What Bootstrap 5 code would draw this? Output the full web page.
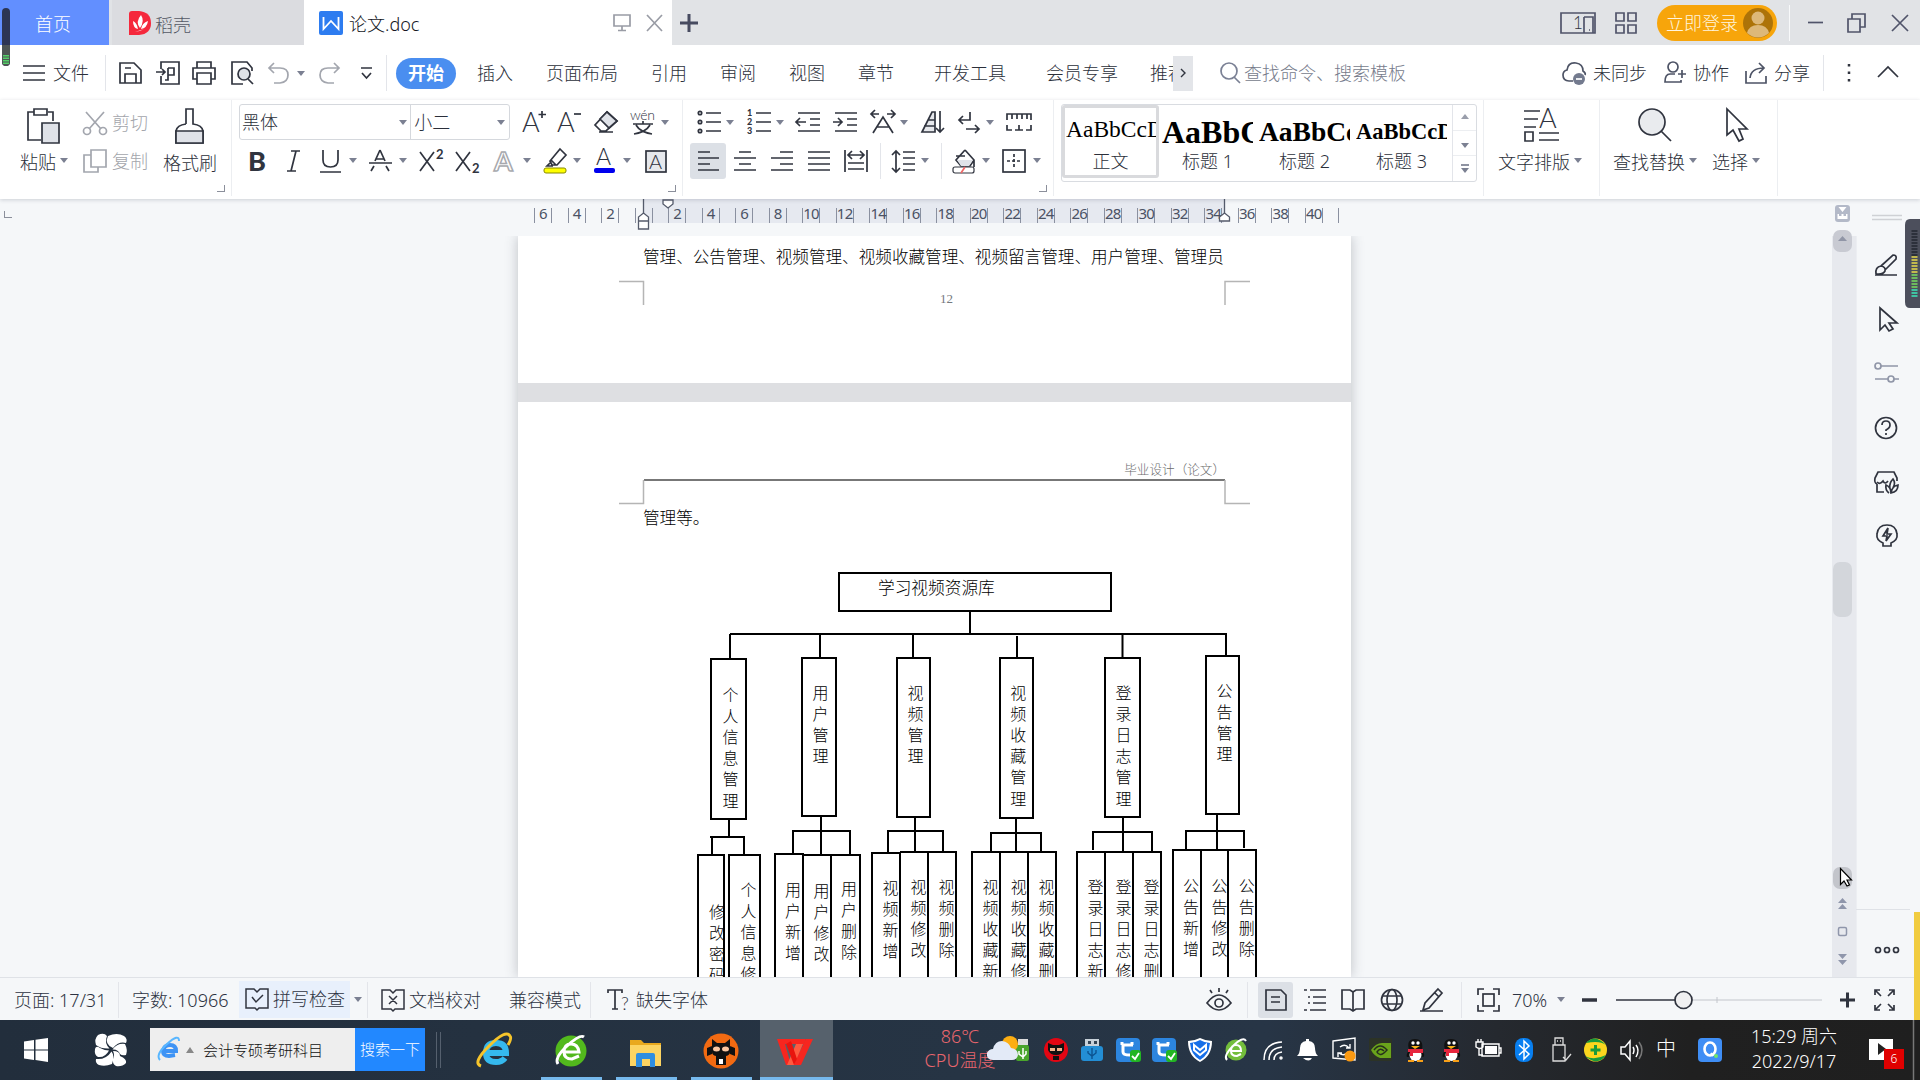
<!DOCTYPE html>
<html lang="zh-CN">
<head>
<meta charset="utf-8">
<title>论文.doc</title>
<link href="https://cdn.jsdelivr.net/npm/bootstrap@5.3.0/dist/css/bootstrap.min.css" rel="stylesheet">
<style>
body{width:1920px;height:1080px;overflow:hidden;font-family:"Noto Sans","Noto Sans CJK SC",sans-serif;font-size:18px;font-weight:300;line-height:24px;color:#2b2f3a;background:#f5f7f9;white-space:nowrap}
svg{display:block;overflow:visible;fill:none;stroke:#30343f;stroke-width:1.7;flex:none}
svg text{stroke:none;fill:#30343f;font-family:Lato,sans-serif}
.gridrow{display:grid;align-items:center;justify-items:start}
.sepline{width:1px;background:#e3e5ea;height:36px}
.caret{width:0;height:0;border:4px solid transparent;border-top:5px solid #7b8092;border-bottom:0}
.dim{color:#a3a5ab}
.titlebar{height:45px;background:#e1e3e6}
.tab-home{width:109px;background:#628fff;color:#fff;padding-left:35px;margin-right:3px;padding-top:3px}
.tab-docer{width:192px;background:#dbdce0;padding-left:17px;gap:4px;color:#555966}
.tab-doc{width:368px;background:#fff;padding-left:15px;color:#16181f}
.tab-doc .fname{margin-left:6px;padding-top:2px}
.tab-doc svg.thin{stroke:#999ca5}
.title-tools{padding-left:8px;grid-template-columns:880px 55px 42px 132px 17px 39px 44px 20px}
.title-tools svg{stroke:#50546a}
.login{width:120px;height:36px;border-radius:18px;background:#f7a50b;color:#fff5df;padding-left:9px;gap:5px}
.menubar{height:55px;background:#fff;padding:1px 0 0 22px;grid-template-columns:31px 52px 13px 38px 36px 38px 38px 29px 21px 40px 28px 10px 81px 69px 105px 69px 69px 69px 76px 112px 104px 23px 46px 25px 317px 32px 70px 30px 51px 30px 49px 14px 39px 40px}
.startpill{width:60px;height:31px;border-radius:16px;background:#4a8ef0;color:#fff;font-weight:700;line-height:30px}
.morebtn{width:20px;height:35px;background:#e3e5e9}
.gray svg,svg.gray{stroke:#a3a6ae}
.share-tools{stroke:#4d5365}
.finder{color:#767b8b}
.ribbon{height:99px;background:#fff;box-shadow:0 1px 4px rgba(60,70,90,.22);position:relative;z-index:3}
.sect{position:relative;border-right:1px solid #eceef1;height:96px;padding-top:3px}
.launch{position:absolute;right:6px;bottom:4px;width:8px;height:7px;border:solid #8b8f9b;border-width:0 1.5px 1.5px 0}
.s1{width:232px}.s2{width:451px}.s3{width:371px}.s4{width:430px}.s5{width:116px}.s6{width:178px}
.colpaste{width:83px}.colcut{width:80px;padding-top:1px}
.rrow{height:38px}
.r2a{padding-left:7px;grid-template-columns:283px 35px 37px 36px 31px auto}
.r2b{padding-left:14px;padding-top:1px;grid-template-columns:36px 37px 30px 19px 31px 20px 36px 38px 30px 20px 30px 20px 30px 21px 24px}
.r3a{padding-left:14px;grid-template-columns:29px 21px 29px 20px 37px 37px 30px 20px 37px 29px 20px 26px}
.r3b{padding-left:7px;padding-top:1px;grid-template-columns:43px 37px 37px 37px 36px 12px 29px 20px 11px 30px 20px 31px 10px}
.onbtn{width:36px;height:36px;background:#dce0e6;border-radius:3px;padding:6px 7px}
.fontbox{width:271px;height:36px;border:1px solid #d5d8dd;border-radius:3px}
.fontname{width:172px;border-right:1px solid #d5d8dd;padding:0 3px 0 2px}
.fontsize{width:98px;padding:0 4px 0 3px}
.gallery{width:416px;height:78px;margin:1px 0 0 7px;border:1px solid #d9dce1;border-radius:3px}
.stylecell{width:97px;text-align:center}
.stylecell.sel{border:3px solid #d9dadd;height:73px;border-radius:3px}
.smp{display:block;overflow:hidden;margin:0 3px 0;height:44px;line-height:46px;text-align:left;color:#000;font-family:"Liberation Serif",serif;font-weight:400}
.sel .smp{margin:0 0 0 1px;font-size:23.5px;height:41px;line-height:42px}
.smp.h1s{font-size:32px;font-weight:700}.smp.h2s{font-size:27.5px;font-weight:700}.smp.h3s{font-size:22.5px;font-weight:700}
.lbl{display:block;font-size:18px}
.galbtns{width:24px;border-left:1px solid #e3e5ea}
.galbtns>div{height:25.5px;border-bottom:1px solid #eceef1}
.bigbtn{padding-top:5px}
.bigbtn .cap{margin-top:6px;gap:4px}
.s5.bigbtn,.s6{padding-top:8px}
.ruler{height:37px;padding-left:534px;position:relative}
.cornerbox{position:absolute;left:4px;top:12px;width:8px;height:7px;border:solid #8b8f9b;border-width:0 0 1.5px 1.5px}
.rulerband{position:absolute;left:643px;top:0;width:581px;height:24px;background:#e6e9f0}
.tick{width:33.53px;height:15px;margin-top:9px;position:relative;border-left:1px solid #8a90a0;font:15px/14px "Noto Sans",sans-serif;letter-spacing:-.8px;color:#4b5264}
.tick span{display:block;width:17px;height:15px;border-right:1px solid #8a90a0;text-align:center;line-height:10px}
.rmarks{position:absolute;left:0;top:0;stroke:#555b6b;stroke-width:1.3}
.work{height:741px;position:relative}
.gutter{width:518px}
.pages{width:833px;background:#dedfe2;box-shadow:0 0 12px rgba(60,65,80,.3);clip-path:inset(0 -14px 0 -14px)}
.sheet{background:#fff;position:relative;color:#000;font-family:"Noto Sans CJK SC",sans-serif}
.sheet1{height:147px;margin-bottom:19px;padding:8px 0 0 125px}
.sheet2{height:575px;padding:57px 126px 0 126px}
.para{font-size:16.6px;line-height:24px}
.sheet2 .para{margin:24px 0 0 -1px}
.pageno{font:13px/14px "Liberation Serif",serif;color:#75797f;width:607px;text-align:center;margin-top:24px}
.hdr{font-size:12.6px;line-height:20px;color:#6c6c6c;text-align:right;border-bottom:2px solid #777}
.marks{position:absolute;left:0;top:0;stroke:#b5b5b5;stroke-width:1.5}
.chart{position:absolute;left:0;top:0;width:833px;height:575px;overflow:hidden}
.chart svg{position:absolute;left:-518px;top:-402px;stroke:#000;stroke-width:2}
.vtxt{position:absolute;width:17px;font-size:16px;line-height:21.2px;white-space:normal;word-break:break-all;text-align:center}
.roottxt{position:absolute;left:360px;top:173px;font-size:16.7px}
.scroller{width:24px;background:#e7e9ee;margin-left:481px;position:relative}
.scroller svg{position:absolute;left:0;top:-37px;stroke:none}
.side{width:64px;border-left:1px solid #eceef2;position:relative}
.side svg{position:absolute;left:-1px;top:-37px}
.statusbar{height:43px;border-top:1px solid #dfe2e7;background:#f5f7f9;padding-left:14px;padding-top:1px;grid-template-columns:104px 14px 108px 127px 14px 28px 100px 81px 17px 29px 569px 42px 11px 45px 38px 39px 39px 42px 16px 35px 45px 25px 33px 225px 33px 30px;color:#2d3342;position:relative}
.spell{width:111px;height:37px;background:#e8f0fc;padding-left:6px;gap:4px;margin:-1px 0 0 -1px}
.viewon{width:35px;height:36px;background:#dce0e6;border-radius:3px;padding:6px 6px}
.taskbar{height:60px;background:linear-gradient(90deg,#222e3c 0,#263444 50%,#273546 66%,#25292f 78%,#202020 88%,#1f1f1f);padding-left:24px;display:flex;position:relative;color:#fff}
.taskbar svg{stroke:none}
.startcol{width:71px;padding-top:18px}.flowercol{width:55px;padding-top:14px}
.seek{width:205px;height:43px;margin-top:8px;background:#eee;color:#111;font-size:15px;padding-left:7px;gap:5px}
.seekbtn{width:70px;height:43px;margin-top:8px;background:#2288ff;color:#fff;font-size:15px;text-align:center;line-height:42px}
.dbl{width:5px;height:36px;margin:12px 0 0 11px;border:solid #55606e;border-width:0 1px}
.apps{margin-left:19px}
.app{width:61px;margin-right:14px;padding-top:14px;border-bottom:3px solid transparent;height:60px}
.app.ie{width:67px}
.app.run{border-color:#76b9ed}
.app.cur{width:73px;margin-right:0;background:#56616c;margin-left:-6px}
.app svg{margin-left:13px}.app.cur svg{margin-left:17px}.app.ie svg{margin-left:17px}
.cputemp{width:100px;margin-left:77px;color:#e9666e;font-size:18px;text-align:center;padding-top:4px}
.traysvg{position:absolute;left:0;top:-1020px}
.clock{position:absolute;left:1734px;top:4px;width:120px;text-align:center;line-height:24.5px}
.imechr{position:absolute;left:1656px;top:7px;font-size:20px;line-height:44px}
.badge6{position:absolute;left:1884px;top:29px;width:20px;height:20px;background:#e00000;font-size:12px;line-height:20px;text-align:center}
.overlay{position:absolute;left:0;top:0;z-index:9;pointer-events:none;stroke:none}
</style>
</head>
<body>
<!-- title bar -->
<div class="titlebar d-flex">
  <div class="tab-home d-flex align-items-center">首页</div>
  <div class="tab-docer d-flex align-items-center"><svg width="22" height="24"><path d="M0 3Q0 0 3 0H10Q22 1 22 12T10 24H0z" fill="#f5283c" stroke="none"/><path d="M11 17Q6 11 12 4Q16 10 11 17M9 18Q4 17 4 10Q8 12 9 18M12 18Q13 12 19 10Q18 17 12 18M6 21Q12 20 15 18" fill="#fff" stroke="none"/></svg><span class="pt-1">稻壳</span></div>
  <div class="tab-doc d-flex align-items-center"><svg width="24" height="24"><rect width="24" height="24" rx="2" fill="#2d7cf0" stroke="none"/><path d="M4.500 6V18L12 10L19.500 18V6" stroke="#fff" stroke-width="1.8"/></svg><span class="fname">论文.doc</span>
   <svg class="ms-auto thin" width="18" height="18"><path d="M1 1H17V12H1zM9 12V16M5 16.5H13"/></svg><svg class="ms-3 thin" width="25" height="16"><path d="M0 0L15 16M15 0L0 16"/></svg></div>
  <div class="title-tools gridrow">
    <svg width="18" height="18"><path d="M9 0V18M0 9H18" stroke="#474b60" stroke-width="3"/></svg>
    <svg width="36" height="22"><path d="M1 1H35V21H1zM24 5H33V21M24 5V21M29 18H30"/><text x="13" y="17" font-size="17">1</text></svg>
    <svg width="23" height="22"><path d="M1 1H9V9H1zM13 1H21V9H13zM1 13H9V21H1zM13 13H21V21H13z"/></svg>
    <div class="login d-flex align-items-center"><span>立即登录</span><svg width="30" height="30"><circle cx="15" cy="15" r="15" fill="#ad7308" stroke="none"/><circle cx="15" cy="10" r="6.5" fill="#ddb879" stroke="none"/><path d="M4 25Q6 17 15 17T26 25Q15 34 4 25" fill="#ddb879" stroke="none"/></svg></div>
    <div class="sepline bg-secondary-subtle"></div>
    <svg width="18" height="18"><path d="M2 8.5H17"/></svg>
    <svg width="22" height="20"><path d="M3 6H15V19H3zM7 6V1H20V14H15"/></svg>
    <svg width="20" height="18"><path d="M3 1L19 17M19 1L3 17"/></svg>
  </div>
</div>
<!-- menu bar -->
<div class="menubar gridrow">
  <svg width="24" height="16"><path d="M1 1H23M1 8H23M1 15H23"/></svg><span>文件</span><i class="sepline"></i>
  <svg width="24" height="24"><path d="M2 22V2H16L23 9V22zM7 22V13H18V22M7 7H13"/></svg>
  <svg width="24" height="24"><path d="M5 8V1H23V23H5V15M0 11H9M6 8L9 11L6 14M12 7H18V14H12V7V19H9"/></svg>
  <svg width="24" height="24"><path d="M5 7V1H19V7M5 18H1V7H23V18H19M5 12H19V23H5z"/></svg>
  <svg width="24" height="24"><path d="M22 10V7L17 1H2V23H13" /><circle cx="14" cy="13" r="6" fill="#dfe2e8"/><path d="M18 18L23 23"/></svg>
  <svg class="gray" width="22" height="22"><path d="M6 1L1 6L6 11M1 6H12Q20 6 20 13T12 21H6"/></svg><i class="caret"></i>
  <svg class="gray" width="22" height="22"><path d="M16 1L21 6L16 11M21 6H10Q2 6 2 13T10 21H16"/></svg>
  <svg width="16" height="14"><path d="M3 2H14M4 7L8.500 12L13 7"/></svg><i class="sepline"></i>
  <span class="startpill text-center">开始</span><span>插入</span><span>页面布局</span><span>引用</span><span>审阅</span><span>视图</span><span>章节</span><span>开发工具</span><span>会员专享</span><span class="overflow-hidden w-100">推荐</span>
  <div class="morebtn d-flex align-items-center justify-content-center"><svg width="6" height="8"><path d="M1 0L5 4L1 8" stroke-width="1.400"/></svg></div>
  <svg width="22" height="22"><path d="M15 15L21 21M18 9A8 8 0 1 1 2 9A8 8 0 1 1 18 9" stroke="#7a8094"/></svg><span class="finder">查找命令、搜索模板</span>
  <svg class="share-tools" width="26" height="24"><path d="M12 20H8Q2 20 2 14Q2 10 6 9Q7 1 15 2Q22 3 22 10Q25 12 24 14"/><circle cx="18" cy="18" r="6" fill="#737a8e" stroke="none"/><path d="M15 18H21" stroke="#fff"/></svg><span>未同步</span>
  <svg class="share-tools" width="24" height="24"><circle cx="10" cy="6" r="5"/><path d="M12 13H7Q2 13 2 21H18V19M19 9V17M15 13H23"/></svg><span>协作</span>
  <svg class="share-tools" width="24" height="24"><path d="M2 10V22H22V15M6 17Q7 7 20 7M15 2L20 7L15 12"/></svg><span>分享</span><i class="sepline"></i>
  <svg width="24" height="22"><path d="M12 2V4.500M12 9.500V12M12 17V19.500" stroke-width="2.5"/></svg>
  <svg width="24" height="14"><path d="M2 11L12 1L22 11"/></svg>
</div>
<!-- ribbon -->
<div class="ribbon d-flex">
  <div class="sect s1 d-flex">
    <div class="colpaste bigbtn ps-3"><svg class="ms-2" width="36" height="36"><path d="M10 4H4V32H17M24 4H29V13M10 1H23V7H10z"/><path d="M18 15H35V35H18z" fill="#dfe2e8"/></svg><div class="cap d-flex ps-1"><span>粘贴</span><i class="caret mt-2"></i></div></div>
    <div class="colcut dim gray"><div class="rrow d-flex align-items-center gap-1"><svg width="25" height="24"><path d="M3 1L18 18M21 1L6 18"/><circle cx="4" cy="20" r="3.5"/><circle cx="20" cy="20" r="3.5"/></svg><span>剪切</span></div>
    <div class="rrow d-flex align-items-center gap-1"><svg width="25" height="24"><path d="M8 6H1V23H15V18M8 1H23V18H8z"/></svg><span>复制</span></div></div>
    <div class="bigbtn"><svg class="ms-2 ps-1" width="35" height="37"><path d="M11 16V1H18V16Q27 17 28 23V35H1V23Q2 17 11 16"/><path d="M1 23H28V35H1z" fill="#dfe2e8"/></svg><div class="cap pt-0">格式刷</div></div>
    <i class="launch"></i>
  </div>
  <div class="sect s2">
    <div class="rrow gridrow r2a">
      <div class="fontbox d-flex"><div class="fontname d-flex align-items-center justify-content-between"><span>黑体</span><i class="caret"></i></div><div class="fontsize d-flex align-items-center justify-content-between"><span>小二</span><i class="caret"></i></div></div>
      <svg width="24" height="24"><text x="0" y="22" font-size="27" font-weight="300">A</text><path d="M20 1V8M16.500 4.500H24"/></svg>
      <svg width="24" height="24"><text x="0" y="22" font-size="27" font-weight="300">A</text><path d="M17 4H24"/></svg>
      <svg width="24" height="24"><path d="M13 2L23 11L12 21H7L1 15zM5 22H19"/><path d="M13 2L23 11L15 18L6 9z" fill="#dfe2e8"/></svg>
      <svg width="26" height="26"><text x="0" y="11" font-size="14" textLength="25">wén</text><path d="M3 15H23M13 12V15M6 16Q10 23 22 25M20 16Q16 23 4 25"/></svg><i class="caret"></i>
    </div>
    <div class="rrow gridrow r2b">
      <svg width="24" height="24"><text x="2" y="22" font-size="27" font-weight="900">B</text></svg>
      <svg width="24" height="24"><path d="M9 2H18M5 22H14M14 2L9 22"/></svg>
      <svg width="24" height="24"><path d="M4 1V11Q4 18 11.500 18T19 11V1M1 23H22"/></svg><i class="caret"></i>
      <svg width="24" height="24"><path d="M12 1L7 12M12 1L17 12M1 14H24M6 17L3 22M18 17L21 22M8 10H16"/></svg><i class="caret"></i>
      <svg width="26" height="24"><path d="M1 3L15 22M15 3L1 22"/><text x="17" y="10" font-size="13" font-weight="700">2</text></svg>
      <svg width="26" height="24"><path d="M1 3L15 22M15 3L1 22"/><text x="17" y="24" font-size="13" font-weight="700">2</text></svg>
      <svg width="24" height="24"><text x="1" y="22" font-size="27" font-weight="700" style="fill:#fff;stroke:#a7a9ae;stroke-width:1.5">A</text></svg><i class="caret"></i>
      <svg width="24" height="26"><path d="M17 1L23 7L14 17H9L7 13zM8 12L13 17M7 15L4 18H10"/><rect x="1" y="20" width="22" height="5" rx="2" fill="#ff0" stroke="#888a00" stroke-width="1"/></svg><i class="caret"></i>
      <svg width="24" height="26"><text x="3" y="17" font-size="23">A</text><rect x="1" y="20" width="21" height="5" rx="2" fill="#00e" stroke="none"/></svg><i class="caret"></i>
      <svg width="24" height="24"><rect x="2" y="2" width="20" height="21" fill="#e6e8ec"/><text x="5" y="19.500" font-size="20">A</text></svg>
    </div>
    <i class="launch"></i>
  </div>
  <div class="sect s3">
    <div class="rrow gridrow r3a">
      <svg width="24" height="24"><path d="M9 3H24M9 12H24M9 21H24"/><circle cx="3" cy="3" r="1.700"/><circle cx="3" cy="12" r="1.700"/><circle cx="3" cy="21" r="1.700"/></svg><i class="caret"></i>
      <svg width="24" height="24"><path d="M9 3H24M9 12H24M9 21H24"/><text x="0" y="6" font-size="9" font-weight="900">1</text><text x="0" y="15" font-size="9" font-weight="900">2</text><text x="0" y="24" font-size="9" font-weight="900">3</text></svg><i class="caret"></i>
      <svg width="24" height="24"><path d="M2 3H24M14 9H24M14 15H24M2 21H24M0 12H10M4 8L0 12L4 16"/></svg>
      <svg width="24" height="24"><path d="M2 3H24M14 9H24M14 15H24M2 21H24M0 12H9M5 8L9 12L5 16"/></svg>
      <svg width="26" height="24"><path d="M1 4H9M5 0L1 4L5 8M17 4H25M21 0L25 4L21 8M3 23L13 7L23 23M7 17H19"/></svg><i class="caret"></i>
      <svg width="24" height="24"><path d="M2 22L12 2H15V22zM8 10H15M4 16H15" fill="#e6e8ec"/><path d="M20 1V22M16 18L20 22L24 18"/></svg>
      <svg width="24" height="24"><path d="M13 2V10H2M6 6L2 10L6 14M9 19H22M18 15L22 19L18 23"/></svg><i class="caret"></i>
      <svg width="26" height="24"><path d="M1 10V4H25V10M6 4V9M11 4V9M16 4V9M21 4V9M1 15V20H6M20 20H25V15M13 15V20M9 20H17"/></svg>
    </div>
    <div class="rrow gridrow r3b">
      <div class="onbtn"><svg width="24" height="24"><path d="M1 3H13M1 9H22M1 15H13M1 21H22" /></svg></div>
      <svg width="24" height="24"><path d="M6 3H18M1 9H23M6 15H18M1 21H23"/></svg>
      <svg width="24" height="24"><path d="M10 3H23M1 9H23M10 15H23M1 21H23"/></svg>
      <svg width="24" height="24"><path d="M1 3H23M1 9H23M1 15H23M1 21H23"/></svg>
      <svg width="24" height="24"><path d="M1 1V23M23 1V23M4 6H20M8 2L4 6L8 10M16 2L20 6L16 10M4 14H20M4 20H20"/></svg><i class="sepline"></i>
      <svg width="24" height="24"><path d="M4 2V23M0 6L4 2L8 6M0 19L4 23L8 19M11 3H23M11 9H23M11 15H23M11 21H23"/></svg><i class="caret"></i><i class="sepline"></i>
      <svg width="26" height="24"><path d="M13 1L22 11V18M13 1L4 11L9 17H18L22 11M4 7H13" /><path d="M5 11H21L17 17H9z" fill="#dfe2e8" stroke="none"/><rect x="1" y="18" width="21" height="6" rx="2" fill="#fff" stroke-width="1.200"/><path d="M9 24L13 18" stroke="#e66"/></svg><i class="caret"></i>
      <svg width="24" height="24"><rect x="1" y="1" width="22" height="22"/><path d="M5 12H19M12 5V19" stroke-dasharray="3 2"/></svg><i class="caret"></i>
    </div>
    <i class="launch"></i>
  </div>
  <div class="sect s4"><div class="gallery d-flex">
    <div class="stylecell sel"><span class="smp">AaBbCcDd</span><span class="lbl">正文</span></div>
    <div class="stylecell pt-1"><span class="smp h1s">AaBbC</span><span class="lbl" style="margin-top:-4px">标题 1</span></div>
    <div class="stylecell pt-1"><span class="smp h2s">AaBbCc</span><span class="lbl" style="margin-top:-4px">标题 2</span></div>
    <div class="stylecell pt-1"><span class="smp h3s">AaBbCcD</span><span class="lbl" style="margin-top:-4px">标题 3</span></div>
    <div class="galbtns ms-auto"><div class="d-flex justify-content-center pt-2"><svg width="8" height="8"><path d="M0 6L4 1L8 6z" fill="#9a9eab" stroke="none"/></svg></div><div class="d-flex justify-content-center pt-2"><i class="caret mt-1"></i></div><div class="d-flex justify-content-center pt-2 border-0"><svg width="8" height="11"><path d="M0 1H8" stroke="#7b8092"/><path d="M0 4H8L4 9z" fill="#7b8092" stroke="none"/></svg></div></div>
  </div></div>
  <div class="sect s5 bigbtn"><svg style="margin-left:40px" width="36" height="34"><path d="M0 3H16M0 11H14M0 19H12M1 24H9V33H1zM15 25H35M15 32H35"/><text x="15" y="20" font-size="27" font-weight="300">A</text></svg><div class="cap d-flex" style="padding-left:14px;margin-top:8px"><span>文字排版</span><i class="caret mt-2"></i></div></div>
  <div class="sect s6 d-flex"><div style="padding-left:13px;width:99px" class="bigbtn pt-0"><svg style="margin-left:25px" width="34" height="34"><circle cx="14" cy="14" r="13" fill="#e9ebee"/><path d="M23 23L33 33"/></svg><div class="cap d-flex" style="margin-top:8px"><span>查找替换</span><i class="caret mt-2"></i></div></div>
  <div style="padding-left:13px" class="bigbtn pt-0"><svg style="margin-left:14px" width="24" height="34"><path d="M1 1V27L7 22L13 33L17 31L13 21H21z"/></svg><div class="cap d-flex" style="margin-top:8px"><span>选择</span><i class="caret mt-2"></i></div></div></div>
</div>
<!-- ruler -->
<div class="ruler d-flex"><i class="cornerbox"></i><div class="rulerband"></div><div class="d-flex" id="ticks"></div>
<svg class="rmarks" width="1400" height="37"><path d="M643.500 0V16M1224.500 0V16"/><path d="M663 1H673V5L668 9L663 5zM638.500 22V18L643.500 14L648.500 18V22zM638.500 22H648.500V30H638.500zM1219.500 22V18L1224.500 14L1229.500 18V22z" fill="#fff"/></svg></div>
<!-- document area -->
<div class="work d-flex">
  <div class="gutter"></div>
  <div class="pages">
    <div class="sheet sheet1"><svg class="marks" width="833" height="147"><path d="M101 45.500H125.500V69M732 45.500H707V69"/></svg><div class="para">管理、公告管理、视频管理、视频收藏管理、视频留言管理、用户管理、管理员</div><div class="pageno">12</div></div>
    <div class="sheet sheet2"><svg class="marks" width="833" height="147"><path d="M101 101.500H125.500V78M732 101.500H707V78"/></svg><div class="hdr">毕业设计（论文）</div><div class="para">管理等。</div>
      <div class="chart" id="chart"><svg width="1400" height="980"><path d="M839 573H1111V611H839zM970 612V634M730 634H1227M730 634V658M820 634V657M913 634V657M1017 636V657M1122.500 634V657M1226 634V655
M711 659H746V819H711zM802 658H836V816H802zM897 658H930V817H897zM1000 658H1033V818H1000zM1105 658H1140V817H1105zM1206 656H1239V814H1206z
M729 820V837M710 837H745M712 837V855M744 837V855M821 817V855M793 855V831H850V855M915 818V852M888 853V831H943V852M1016 819V852M991 852V833H1041V852M1123 818V852M1093 850V832H1152V852M1217 815V850M1186 850V831H1244V848
M698 990V855H724V990M729 990V855H760V990M775 990V854H803V990M803 855H860V990M831 855V990M872 990V853H900V990M900 852H956V990M928 852V990M972 990V852H1056V990M1000 852V990M1028 852V990M1077 990V852H1161V990M1105 852V990M1133 852V990M1173 990V850H1256V990M1201 850V990M1228 850V990"/></svg><div class="roottxt">学习视频资源库</div></div>
    </div>
  </div>
  <div class="scroller"><svg width="24" height="790"><rect x="3" y="6" width="15" height="17" rx="3" fill="#b3b9c8"/><path d="M6.500 8H14.500L10.500 13zM5.500 15H7V17H9.500V15H11.500V17H14V15H15.500V20H5.500z" fill="#fff"/><rect x="1" y="31" width="19" height="22" rx="7" fill="#c8cad2"/><path d="M6 42L10.500 37L15 42z" fill="#9095a6"/><rect x="1" y="363" width="19" height="55" rx="7" fill="#d3d6db"/><rect x="1" y="668" width="19" height="22" rx="7" fill="#c3c5cb"/><path d="M6 704L10.500 699L15 704zM6 710L10.500 705L15 710zM6 755H15L10.500 760zM6 761H15L10.500 766z" fill="#8f96ab"/><rect x="6.500" y="728.500" width="8" height="8" rx="1.500" stroke="#8f96ab" stroke-width="1.500"/></svg></div>
  <div class="side"><svg width="64" height="790">
    <path d="M16 16.500H46M16 20.500H46" stroke="#cfd1d5" stroke-width="1.300"/>
    <path d="M19 76H41M20 75Q19 68 25 67Q30 68 29 72Q27 76 20 75M25 67L37 56Q41 56 40 60L29 71"/>
    <path d="M24 109V131L29 126L33 132L37 130L33 124H41z"/>
    <g stroke="#9096a8"><circle cx="22" cy="167" r="3"/><path d="M25 167H42M19 180H32M38 180H43"/><circle cx="35" cy="180" r="3"/></g>
    <circle cx="30" cy="229" r="10.500"/><path d="M26 226Q26 222 30 222T34 226Q34 229 30 231V232M30 234V236"/>
    <path d="M21 285V293H28M21 285Q18 284 19 279L22 273H38L41 279V282M21 283Q24 286 27 282Q29 286 32 282M33 294Q29 291 30 286Q35 288 35 294Q42 293 42 286Q36 287 35 294M34 289Q33 284 37 280Q40 284 37 289"/>
    <path d="M27 347V344Q20 341 21 335Q22 326 31 326T41 335Q42 341 35 344V347zM32 329L27 337H31L30 342L35 335H31z"/>
    <path d="M0 710.500H54" stroke="#dfe2e7" stroke-width="1"/><circle cx="22" cy="751" r="2.500"/><circle cx="31" cy="751" r="2.500"/><circle cx="40" cy="751" r="2.500"/></svg></div>
</div>
<!-- status bar -->
<div class="statusbar gridrow">
  <span>页面: 17/31</span><i class="sepline"></i><span>字数: 10966</span>
  <div class="d-flex align-items-center"><div class="spell d-flex align-items-center"><svg width="24" height="22"><path d="M10 20H1V1H9L12 4L15 1H23V20H14L12 22zM7 9L11 14L18 7" stroke-width="1.500"/></svg><span>拼写检查</span></div><i class="caret ms-1"></i></div><i class="sepline"></i>
  <svg width="24" height="22"><path d="M10 20H1V1H9L12 4L15 1H23V20H14L12 22zM8 7L16 15M16 7L8 15" stroke-width="1.500"/></svg><span>文档校对</span><span>兼容模式</span><i class="sepline"></i>
  <svg width="26" height="24"><path d="M1 5V2H15V5M8 2V21M5 21H11"/><text x="14" y="22" font-size="18">?</text></svg><span>缺失字体</span>
  <svg width="26" height="26"><path d="M2 16Q14 0 26 16Q14 30 2 16z"/><circle cx="14" cy="16" r="4"/><path d="M14 5V1M7 6L5 3M21 6L23 3"/></svg><i class="sepline"></i>
  <div class="viewon"><svg width="24" height="24"><path d="M2 2H17L22 7V22H2zM7 9H16M7 14H16" /></svg></div>
  <svg width="24" height="24"><path d="M1 2H4M7 2H23M5 9H7M10 9H23M5 15H7M10 15H23M1 22H4M7 22H23"/></svg>
  <svg width="24" height="24"><path d="M12 4L9 2H1V21H9L12 23L15 21H23V2H15zM12 4V23"/></svg>
  <svg width="24" height="24"><circle cx="12" cy="12" r="10.500"/><ellipse cx="12" cy="12" rx="5" ry="10.500"/><path d="M3 8H21M3 16H21"/></svg>
  <svg width="26" height="24"><path d="M19 1L23 5L10 20L4 22L6 15zM16 5L20 9M1 23H24"/></svg><i class="sepline"></i>
  <svg width="24" height="24"><path d="M1 7V1H7M16 1H22V7M22 17V23H16M7 23H1V17"/><rect x="6" y="6" width="11" height="12"/></svg><span>70%</span><i class="caret"></i>
  <svg width="16" height="18"><path d="M0 9H15" stroke-width="3.500"/></svg>
  <svg width="208" height="20"><path d="M1 10H60"/><path d="M77 10H207M102 7V13" stroke="#c3c6cc" stroke-width="1"/><circle cx="68.500" cy="10" r="8.500" fill="#f0f0f1"/></svg>
  <svg width="16" height="18"><path d="M0 9H15M7.500 1.500V16.500" stroke-width="3"/></svg>
  <svg width="24" height="24"><path d="M8 8L2 2M2 7V2H7M15 8L21 2M16 2H21V7M8 16L2 22M2 17V22H7M15 16L21 22M16 22H21V17"/></svg>
</div>
<!-- taskbar -->
<div class="taskbar">
  <div class="startcol"><svg width="24" height="24"><path d="M0 3.500L10 2V11.500H0zM11.500 1.800L24 0V11.500H11.500zM0 12.500H10V22L0 20.500zM11.500 12.500H24V24L11.500 22z" fill="#fff"/></svg></div>
  <div class="flowercol"><svg width="32" height="32"><g fill="#fff"><path d="M14.500 14.500Q6 15 1 11Q-1 5 3 1Q9-2 12 2Q9 9 14.500 14.500"/><path d="M13 2Q22-2 29 2Q33 5 31 9Q24 7 18 14Q9 10 13 2"/><path d="M17.500 15.500Q22 9 30 10Q33 16 31 21Q27 22 25 20Q23 15 17.500 15.500"/><path d="M18 17Q25 17 25 22Q32 25 31 29Q27 33 21 32Q17 30 18 25Q20 21 18 17"/><path d="M16.500 17.500Q20 22 17 30Q10 33 4 31Q0 29 1 25Q11 26 16.500 17.500"/><path d="M14 16.500Q10 24 3 23Q-1 21 0 15Q1 11 5 14Q10 16.500 14 16.500"/></g></svg></div>
  <div class="seek d-flex align-items-center"><svg width="24" height="24"><path d="M5 13H19Q19 7 13 7T6 13Q6 18 12 18L18 17" style="stroke:#3d93f5;stroke-width:4"/><path d="M3 22Q-2 17 10 6T22 3" style="stroke:#58b6ff;stroke-width:2"/></svg><svg width="8" height="8"><path d="M0 7L4 1L8 7z" fill="#888"/></svg><span class="ms-1">会计专硕考研科目</span></div>
  <div class="seekbtn">搜索一下</div><i class="dbl"></i>
  <div class="apps d-flex">
    <div class="app ie"><svg width="36" height="34"><path d="M9 19H29Q29 9 19 9T9 19Q9 28 19 28Q25 28 28 24" style="stroke:#35b9ee;stroke-width:6"/><path d="M4 32Q-5 29 12 12T33 2Q35 4 31 11" style="stroke:#f5c42b;stroke-width:3"/></svg></div>
    <div class="app run"><svg width="34" height="34"><circle cx="17" cy="17" r="15.500" fill="#52b91d"/><path d="M10 18H25Q24 10 17 10T10 18Q10 25 18 25L25 22M4 30Q0 24 13 12T30 3" style="stroke:#fff;stroke-width:3"/></svg></div>
    <div class="app run"><svg width="34" height="34"><path d="M1 6H12L15 9H32V31H1z" fill="#e9a91e"/><path d="M1 11H32V32H1z" fill="#fcd462"/><path d="M7 33V21Q7 19 9 19H24Q26 19 26 21V33H21V25H13V33z" fill="#2f8ee0"/></svg></div>
    <div class="app run"><svg width="36" height="36"><circle cx="17" cy="17" r="17.500" fill="#f26a12"/><path d="M8 5L13 9H21L26 5V18Q26 21 22 22V31H12V22Q8 21 8 18zM3 14L8 12V20L3 22zM31 14L26 12V20L31 22z" fill="#111"/><ellipse cx="12.500" cy="15" rx="3.500" ry="2.500" fill="#fbc6a0"/><ellipse cx="21.500" cy="15" rx="3.500" ry="2.500" fill="#fbc6a0"/><path d="M15 25H19V30H15z" fill="#fff"/></svg></div>
    <div class="app run cur"><svg width="38" height="34"><path d="M0 5H29L27 10H8L14 31H9z" fill="#f7261f"/><path d="M16 31L29 5H36L24 31z" fill="#f7261f"/><path d="M19 10H26L17 31H10z" fill="#ff5a40"/><path d="M14 7L20 25L17 31L9 10z" fill="#e8140e"/></svg></div>
  </div>
  <div class="cputemp">86℃<br>CPU温度</div>
  <svg class="traysvg" width="1920" height="1080">
    <rect x="1016" y="1045" width="13" height="16" rx="2" fill="#4aa52c"/><path d="M1018 1039H1028V1045H1018z" fill="#ddd"/><path d="M1023 1048V1059M1019 1051V1054L1023 1057L1026 1054V1051" style="stroke:#fff;stroke-width:1.500"/><circle cx="1010" cy="1044" r="8" fill="#fcae12"/><path d="M993 1060Q986 1060 987 1053Q989 1049 993 1049Q995 1041 1002 1041Q1009 1042 1011 1048Q1018 1049 1018 1055Q1017 1060 1012 1060z" fill="#e3eaf7"/>
    <circle cx="1056" cy="1050" r="12" fill="#e30613"/><path d="M1048 1043L1053 1045H1059L1064 1043V1050Q1062 1055 1056 1055T1048 1050z" fill="#111"/><path d="M1050 1048H1055V1051H1050zM1057 1048H1062V1051H1057z" fill="#f5b28a"/><path d="M1053 1056H1059V1060H1053z" fill="#111"/>
    <rect x="1081" y="1046" width="22" height="15" rx="3" fill="#238ed5"/><path d="M1085 1039H1099V1046H1085z" fill="#c8d1d9"/><path d="M1088 1041H1091V1044H1088zM1094 1041H1097V1044H1094z" fill="#345"/><path d="M1092 1048V1059M1088 1051V1053L1092 1056L1096 1053V1050" style="stroke:#0c5390;stroke-width:1.400"/>
    <g id="syncbox"><rect x="1116" y="1038" width="24" height="24" rx="4" fill="#2c85df"/><path d="M1133 1045H1123V1052Q1123 1055 1130 1055M1122 1042V1045M1132 1042V1045" style="stroke:#fff;stroke-width:3"/><rect x="1130" y="1050" width="11" height="12" rx="3" fill="#22b523"/><path d="M1132 1056L1135 1059L1139 1053" style="stroke:#fff;stroke-width:1.800"/></g><use href="#syncbox" x="36"/>
    <path d="M1200 1038Q1206 1041 1212 1041Q1212 1056 1200 1062Q1188 1056 1188 1041Q1194 1041 1200 1038" fill="#fff"/><path d="M1200 1040Q1205 1043 1210 1043Q1209 1055 1200 1060Q1191 1055 1190 1043Q1195 1043 1200 1040" fill="#176fe8"/><path d="M1194 1045L1200 1050L1206 1045V1050L1200 1055L1194 1050z" style="stroke:#fff;stroke-width:2"/>
    <circle cx="1236" cy="1050" r="10.500" fill="#73bd3c"/><path d="M1231 1051H1241Q1241 1045 1236 1045T1231 1051Q1231 1056 1237 1056L1241 1054M1227 1060Q1223 1056 1233 1046T1246 1041" style="stroke:#fff;stroke-width:2"/>
    <g style="stroke:#fff;stroke-width:1.500"><path d="M1264 1060Q1264 1043 1282 1042M1269 1060Q1269 1048 1282 1047M1274 1060Q1274 1053 1282 1052"/><circle cx="1281" cy="1058" r="1"/></g>
    <path d="M1297 1056Q1300 1053 1300 1048Q1300 1042 1306 1041V1039H1309V1041Q1315 1042 1315 1048Q1315 1053 1318 1056zM1303 1058H1312Q1309 1063 1303 1058" fill="#fff"/>
    <path d="M1333 1041L1355 1038V1060L1333 1058zM1340 1047Q1345 1043 1349 1048M1350 1044V1048H1346M1348 1052Q1344 1057 1339 1053M1338 1057V1053H1342" style="stroke:#fff;stroke-width:1.400"/><circle cx="1350" cy="1056" r="5.500" fill="#fb9a12"/>
    <rect x="1369" y="1038" width="23" height="23" rx="2" fill="#2c3326"/><path d="M1371 1050Q1376 1043 1382 1043H1391V1058H1380Q1374 1056 1371 1050" fill="#6aa41b"/><path d="M1374 1050Q1380 1042 1387 1050Q1380 1058 1377 1052Q1380 1047 1384 1051" style="stroke:#26301c;stroke-width:1.500"/>
    <g id="penguin"><path d="M1409 1057Q1404 1058 1409 1050Q1406 1039 1415 1039T1422 1050Q1427 1058 1421 1057z" fill="#111"/><ellipse cx="1415.500" cy="1055" rx="6" ry="6" fill="#fff"/><path d="M1408 1049H1423V1053H1413V1056H1410V1052H1408z" fill="#e7263e"/><path d="M1411 1046H1420L1415 1049z" fill="#f8b218"/><circle cx="1413" cy="1043" r="1.700" fill="#fff"/><circle cx="1418" cy="1043" r="1.700" fill="#fff"/><path d="M1408 1060H1414V1062H1408zM1417 1060H1423V1062H1417z" fill="#f8a018"/></g><use href="#penguin" x="36"/>
    <path d="M1482 1044H1499V1056H1482zM1499 1048H1501V1053H1499M1476 1042H1483V1047Q1480 1050 1476 1047zM1478 1039V1042M1481 1039V1042M1479 1049V1055H1483" style="stroke:#fff;stroke-width:1.400"/><rect x="1485" y="1046" width="12" height="8" fill="#fff"/>
    <rect x="1515" y="1038" width="18" height="24" rx="8" fill="#087ff0"/><path d="M1519 1045L1529 1054L1524 1059V1041L1529 1046L1519 1055" style="stroke:#fff;stroke-width:1.500"/>
    <path d="M1553 1045H1565V1061H1553zM1555 1045V1038H1563V1045M1557 1041H1558M1560 1041H1561M1563 1057L1566 1060L1571 1054" style="stroke:#ddd;stroke-width:1.300"/>
    <circle cx="1595.500" cy="1050" r="11.500" fill="#fbd61e"/><path d="M1586 1043Q1595 1033 1606 1045Q1600 1040 1586 1043M1585 1056Q1594 1061 1606 1055Q1598 1067 1585 1056" fill="#189b3c"/><path d="M1595.500 1045V1055M1590.500 1050H1600.500" style="stroke:#189b3c;stroke-width:3"/>
    <path d="M1621 1047H1625L1630 1041V1060L1625 1054H1621zM1633 1047Q1635 1050 1633 1054M1636 1045Q1640 1050 1636 1057" style="stroke:#fff;stroke-width:1.500"/><path d="M1639 1042Q1645 1050 1639 1059" style="stroke:#777;stroke-width:1.500"/>
    <rect x="1698" y="1038" width="24" height="24" rx="4" fill="#3f8ef5"/><ellipse cx="1710" cy="1049" rx="5.500" ry="6.500" style="stroke:#fff;stroke-width:2.600"/><path d="M1711 1053L1713 1056" style="stroke:#fff;stroke-width:2"/><circle cx="1716" cy="1056" r="2" fill="#6fe66c"/>
    <rect x="1869" y="1039" width="24" height="21" fill="#fff"/><path d="M1878 1043L1886 1049L1878 1055z" fill="#222"/><path d="M1913.500 1020V1080" style="stroke:#777;stroke-width:1.500"/>
  </svg>
  <span class="imechr">中</span><div class="clock">15:29 周六<br>2022/9/17</div><span class="badge6">6</span>
</div>
<!-- floating desktop gadgets and pointer -->
<svg class="overlay" width="1920" height="1080">
  <rect x="2" y="8" width="8" height="58" rx="4" fill="#2c3554"/><path d="M2 45H10V62Q10 66 6 66T2 62z" fill="#4e5554"/><path d="M6 55V65" style="stroke:#54d068;stroke-width:6;stroke-dasharray:1.500 1"/>
  <path d="M1920 219H1910Q1905 219 1905 225V302Q1905 308 1910 308H1920z" fill="#4c4f5c"/><path d="M1914.500 230V256" style="stroke:#2c303b;stroke-width:6;stroke-dasharray:2 1"/><path d="M1914.500 256V274" style="stroke:#c2b84d;stroke-width:6;stroke-dasharray:2 1"/><path d="M1914.500 274V289" style="stroke:#6cba5d;stroke-width:6;stroke-dasharray:2 1"/><path d="M1914.500 289V298" style="stroke:#3fc3a1;stroke-width:6;stroke-dasharray:2 1"/>
  <rect x="1914" y="912" width="8" height="108" fill="#f1cc40"/>
  <path d="M1840.500 868.500V884.500L1844 881L1847 886L1849.500 885L1847 880H1851.500z" style="fill:#fff;stroke:#000;stroke-width:1.200"/>
</svg>
<script src="https://cdn.jsdelivr.net/npm/bootstrap@5.3.0/dist/js/bootstrap.bundle.min.js"></script>
<script>
// ruler marks: every second character, with the zero mark left blank
const marks=[6,4,2,''];for(let n=2;n<=40;n+=2)marks.push(n);
document.getElementById('ticks').innerHTML=marks.map(n=>`<div class="tick"><span>${n}</span></div>`).join('')+'<div class="tick"></div>';
// vertical labels: text, centre x, centre y of the first character (window units)
const labels=[['个人信息管理',730.5,695],['用户管理',820.5,693],['视频管理',915.4,693],['视频收藏管理',1018.3,693],['登录日志管理',1123.6,693],['公告管理',1224.6,691],
['修改密码',717,912],['个人信息修改',748.5,890],['用户新增',793,890],['用户修改',821.5,891],['用户删除',849,889],['视频新增',890.5,888],['视频修改',918.4,887],['视频删除',946.4,887],
['视频收藏新增',990.4,887],['视频收藏修改',1018.7,887],['视频收藏删除',1046.6,887],['登录日志新增',1095.5,887],['登录日志修改',1123.5,887],['登录日志删除',1151.5,887],['公告新增',1191,886],['公告修改',1219.6,886],['公告删除',1246.8,886]];
document.getElementById('chart').insertAdjacentHTML('beforeend',labels.map(([t,x,y])=>`<div class="vtxt" style="left:${(x-8.5-518).toFixed(1)}px;top:${(y-11.5-402).toFixed(1)}px">${t}</div>`).join(''));
</script>
</body>
</html>
